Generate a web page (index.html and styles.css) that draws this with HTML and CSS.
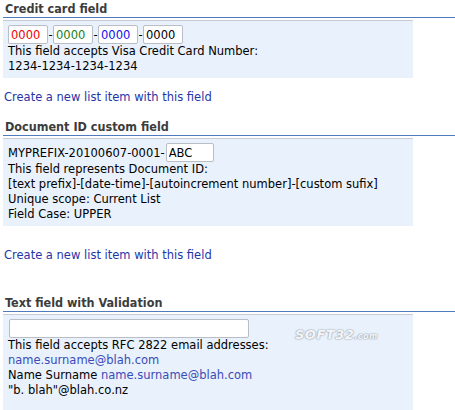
FILE: index.html
```html
<!DOCTYPE html>
<html>
<head>
<meta charset="utf-8">
<link rel="stylesheet" href="styles.css">
</head>
<body>
<div class="page">
  <section class="sec sec-cc">
    <h2 class="head">Credit card field</h2>
    <div class="box box-cc">
      <div class="row">
        <input class="inp inp-cc red" value="0000"><span class="dash">-</span><input class="inp inp-cc green" value="0000"><span class="dash">-</span><input class="inp inp-cc blue" value="0000"><span class="dash">-</span><input class="inp inp-cc" value="0000">
      </div>
      <div class="line">This field accepts Visa Credit Card Number:</div>
      <div class="line">1234-1234-1234-1234</div>
    </div>
    <a class="create create-1" href="#">Create a new list item with this field</a>
  </section>

  <section class="sec sec-doc">
    <h2 class="head">Document ID custom field</h2>
    <div class="box box-doc">
      <div class="row row-doc"><span>MYPREFIX-20100607-0001-</span><input class="inp inp-abc" value="ABC"></div>
      <div class="line">This field represents Document ID:</div>
      <div class="line">[text prefix]-[date-time]-[autoincrement number]-[custom sufix]</div>
      <div class="line">Unique scope: Current List</div>
      <div class="line">Field Case: UPPER</div>
    </div>
    <a class="create create-2" href="#">Create a new list item with this field</a>
  </section>

  <section class="sec sec-val">
    <h2 class="head">Text field with Validation</h2>
    <div class="box box-val">
      <div class="row"><input class="inp inp-mail" value=""></div>
      <div class="line">This field accepts RFC 2822 email addresses:</div>
      <div class="line mail">name.surname@blah.com</div>
      <div class="line">Name Surname <span class="mail">name.surname@blah.com</span></div>
      <div class="line">"b. blah"@blah.co.nz</div>
      <span class="watermark">SOFT32<small>.com</small></span>
    </div>
  </section>
</div>
</body>
</html>
```

FILE: styles.css
```css
html, body {
  margin: 0;
  padding: 0;
  background: #ffffff;
}

.page {
  font-family: "DejaVu Sans", Verdana, sans-serif;
  font-size: 11.5px;
  color: #000;
  padding-left: 3px;
}

.sec {
  display: flex;
  flex-direction: column;
  align-items: flex-start;
}

.head {
  margin: 0;
  align-self: stretch;
  font-family: "DejaVu Sans Condensed", "DejaVu Sans", sans-serif;
  font-weight: bold;
  font-size: 12.5px;
  line-height: 17px;
  height: 17px;
  color: #3c3c3c;
  padding-left: 2px;
  border-bottom: 1px solid #4f7bbd;
}

.box {
  position: relative;
  margin-top: 2px;
  width: 405px;
  padding: 4px 0 4px 5px;
  background: #e8f1fc;
  border-top: 1px solid #c8ccd2;
}

.row {
  display: flex;
  align-items: center;
  height: 19px;
}

.line {
  line-height: 15px;
  height: 15px;
  white-space: nowrap;
}

.inp {
  box-sizing: border-box;
  height: 19px;
  margin: 0;
  padding: 0 2px;
  border: 1px solid #b9bec6;
  border-radius: 2px;
  background: #fff;
  font-family: "DejaVu Sans", Verdana, sans-serif;
  font-size: 11.5px;
  color: #000;
  outline: none;
}

.inp-cc { width: 40px; }
.red { color: #ee0000; }
.green { color: #208020; }
.blue { color: #1010ee; }

.dash {
  width: 5px;
  text-align: center;
}

.inp-abc {
  width: 48px;
  margin-left: 1px;
}

.inp-mail { width: 240px; margin-left: 1px; }

.create {
  color: #2535a8;
  text-decoration: none;
  line-height: 15px;
  padding-left: 1px;
}

.create-1 { margin-top: 12px; margin-bottom: 13px; }
.create-2 { margin-top: 22px; margin-bottom: 31px; }

.mail { color: #3a4bb8; }

.box-val { height: 95px; }

.watermark {
  position: absolute;
  left: 292px;
  top: 12px;
  font-family: "DejaVu Sans", sans-serif;
  font-weight: bold;
  font-style: italic;
  font-size: 13px;
  letter-spacing: 0.5px;
  color: #f4f6f9;
  text-shadow: 0 0 2px #9aa0a8, 0 0 1px #7d838c;
}

.watermark small {
  font-size: 8px;
  font-weight: bold;
}
```
